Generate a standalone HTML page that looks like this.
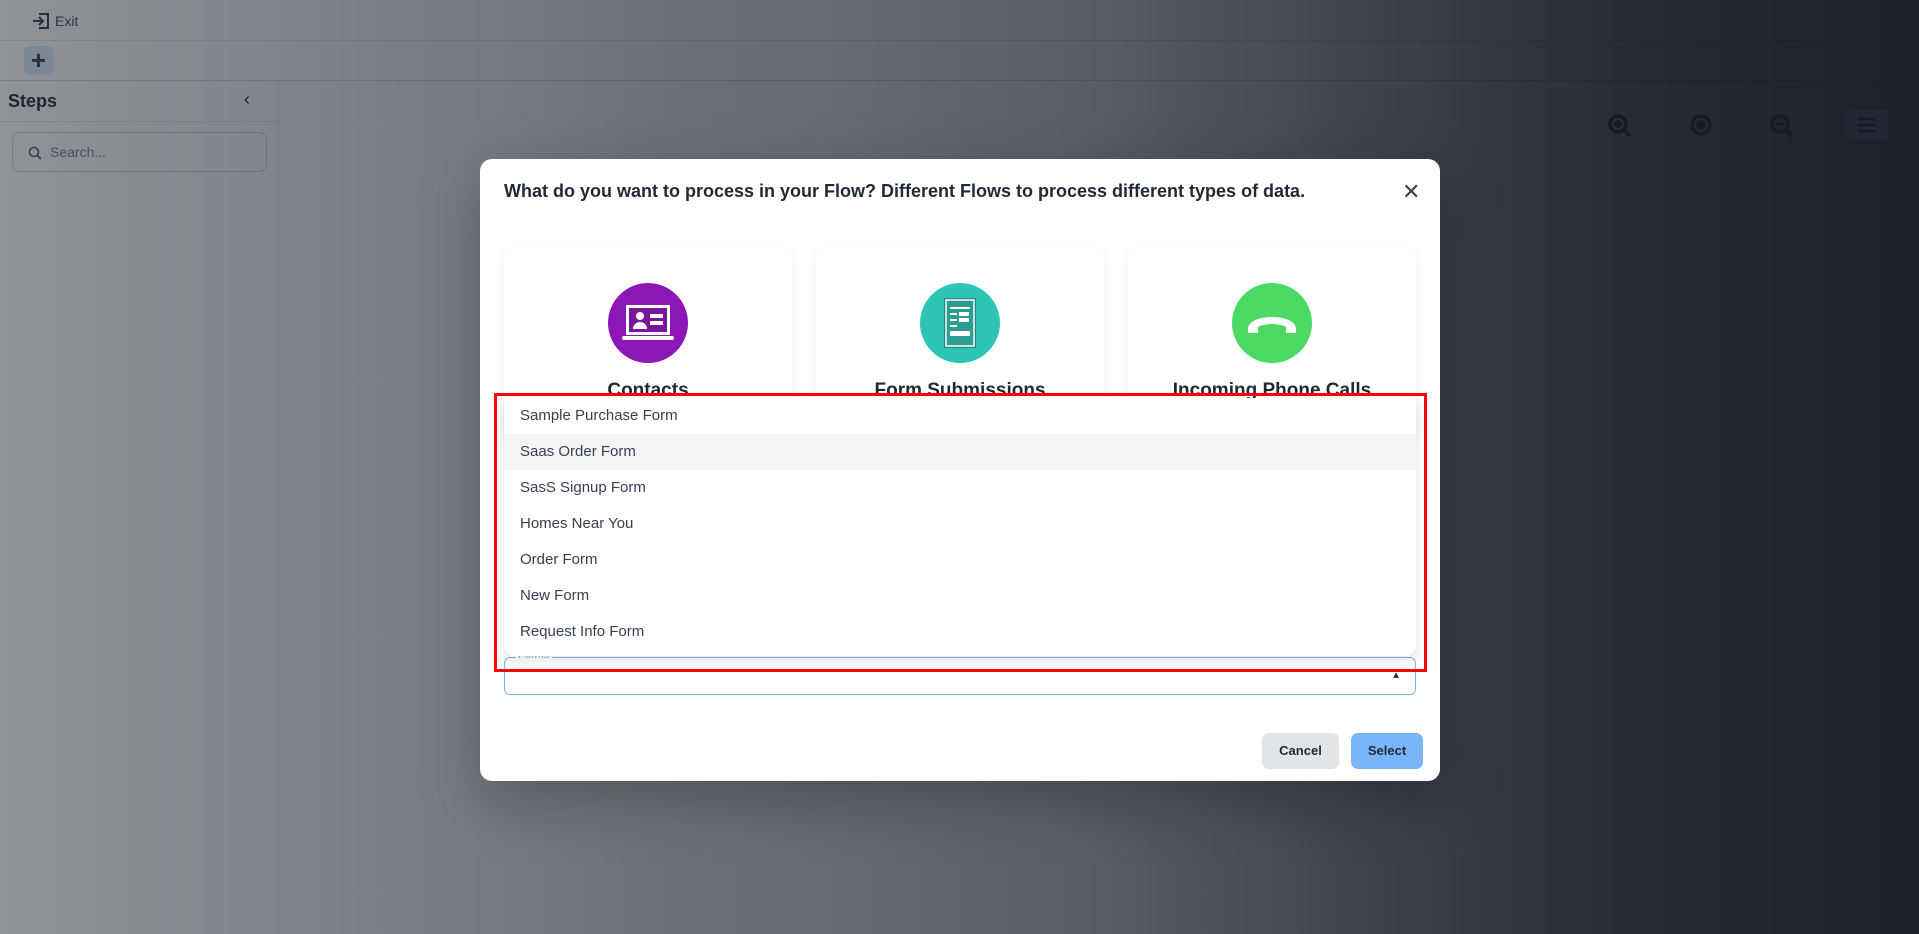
<!DOCTYPE html>
<html><head><meta charset="utf-8"><style>
*{box-sizing:border-box;margin:0;padding:0}
body{width:1919px;height:934px;overflow:hidden;position:relative;font-family:"Liberation Sans",sans-serif;background:linear-gradient(90deg,#909397 0%,#80848a 15%,#6d7177 35%,#5b6069 55%,#3d424b 72%,#262b34 85%,#1b2029 100%)}
.topline{position:absolute;left:0;right:0;height:1px;background:rgba(0,0,0,.08)}
.side{position:absolute;left:0;top:81px;width:279px;height:853px;border-right:1px solid rgba(0,0,0,.08)}
.modal{position:absolute;left:480px;top:159px;width:960px;height:622px;background:#fff;border-radius:12px;box-shadow:0 20px 60px rgba(0,0,0,.25)}
.title{position:absolute;left:24px;top:22px;font-size:18px;font-weight:bold;color:#1f2937}
.close{position:absolute;left:922px;top:20px;font-size:22px;color:#374151}
.card{position:absolute;top:88px;width:288px;height:200px;border-radius:14px;background:#fff;box-shadow:0 2px 10px rgba(0,0,0,.06)}
.circ{position:absolute;left:104px;top:36px;width:80px;height:80px;border-radius:50%}
.ctitle{position:absolute;top:133px;left:0;right:0;text-align:center;font-size:19px;font-weight:bold;color:#1f2937}
.list{position:absolute;left:24px;top:239px;width:912px;height:258px;background:#fff;border-radius:0 0 10px 10px;box-shadow:0 4px 12px rgba(0,0,0,.12)}
.item{height:36px;line-height:36px;padding-left:16px;font-size:15px;color:#374151}
.red{position:absolute;left:494px;top:393px;width:933px;height:279px;border:3px solid #ff0000}
.field{position:absolute;left:24px;top:498px;width:912px;height:38px;border:1.5px solid #7ab1f5;border-radius:6px}
.btn{position:absolute;top:574px;height:36px;border-radius:7px;font-size:13px;font-weight:bold;color:#1f2937;text-align:center;line-height:36px}
</style></head><body>
<div class="topline" style="top:40px"></div>
<div class="topline" style="top:80px;background:rgba(0,0,0,.12)"></div>
<svg style="position:absolute;left:32px;top:12px" width="18" height="18" viewBox="0 0 18 18" fill="none" stroke="#2a2f38" stroke-width="2"><path d="M7 2h9v14H7M1 9h10M7 5l4 4-4 4"/></svg>
<div style="position:absolute;left:55px;top:13px;font-size:14px;color:#2f3540">Exit</div>
<div style="position:absolute;left:24px;top:46px;width:29px;height:29px;border-radius:6px;background:#7d8896;color:#2a2f38;font-size:26px;font-weight:bold;text-align:center;line-height:29px">+</div>
<div class="side">
<div style="height:41px;border-bottom:1px solid rgba(0,0,0,.08);position:relative"><span style="position:absolute;left:8px;top:10px;font-size:18px;font-weight:bold;color:#1f2430">Steps</span><span style="position:absolute;left:244px;top:8px;font-size:18px;color:#1f2430">‹</span></div>
<div style="position:absolute;left:12px;top:51px;width:255px;height:40px;border:1px solid rgba(0,0,0,.15);border-radius:8px"><svg style="position:absolute;left:15px;top:13px" width="14" height="14" viewBox="0 0 14 14" fill="none" stroke="#3a3f48" stroke-width="1.6"><circle cx="6" cy="6" r="4.5"/><path d="M9.5 9.5L13 13"/></svg><span style="position:absolute;left:37px;top:11px;font-size:14px;color:#4a505a">Search...</span></div>
</div>
<svg style="position:absolute;left:1606px;top:112px" width="30" height="30" viewBox="0 0 30 30" fill="none" stroke="#161a21" stroke-width="3.5"><circle cx="12" cy="12" r="8"/><path d="M18 18l6 6M12 8v8M8 12h8"/></svg>
<svg style="position:absolute;left:1688px;top:112px" width="26" height="26" viewBox="0 0 26 26"><circle cx="13" cy="13" r="9" fill="none" stroke="#161a21" stroke-width="3"/><circle cx="13" cy="13" r="5" fill="#161a21"/></svg>
<svg style="position:absolute;left:1768px;top:112px" width="30" height="30" viewBox="0 0 30 30" fill="none" stroke="#161a21" stroke-width="3.5"><circle cx="12" cy="12" r="8"/><path d="M18 18l6 6M8 12h8"/></svg>
<div style="position:absolute;left:1845px;top:110px;width:43px;height:30px;background:#222833;border-radius:4px"><svg width="43" height="30" viewBox="0 0 43 30" stroke="#161a21" stroke-width="2.5"><path d="M13 9h17M13 15h17M13 21h17"/></svg></div>
<div class="modal">
<div class="title">What do you want to process in your Flow? Different Flows to process different types of data.</div>
<div class="close">✕</div>
<div class="card" style="left:24px"><div class="circ" style="background:#8d17b5"><svg width="80" height="80" viewBox="0 0 80 80"><rect x="18" y="22" width="44" height="30" fill="#fff"/><rect x="21" y="25" width="38" height="24" fill="#7a1499"/><circle cx="32" cy="33" r="4" fill="#fff"/><path d="M25 46a7 7 0 0 1 14 0z" fill="#fff"/><rect x="42" y="31" width="13" height="4" fill="#fff"/><rect x="42" y="38" width="13" height="4" fill="#fff"/><rect x="14" y="53" width="52" height="4" rx="2" fill="#fff"/></svg></div><div class="ctitle">Contacts</div></div>
<div class="card" style="left:336px"><div class="circ" style="background:#2ec4b6"><svg width="80" height="80" viewBox="0 0 80 80"><rect x="24" y="15" width="32" height="50" fill="#1f8a80"/><rect x="26" y="17" width="28" height="46" fill="#2a9d90" stroke="#fff" stroke-width="1.5"/><g fill="#fff"><rect x="30" y="24" width="20" height="2"/><rect x="30" y="30" width="7" height="2"/><rect x="39" y="29" width="10" height="4"/><rect x="30" y="36" width="7" height="2"/><rect x="39" y="35" width="10" height="4"/><rect x="30" y="42" width="7" height="2"/><rect x="30" y="48" width="20" height="5"/></g></svg></div><div class="ctitle">Form Submissions</div></div>
<div class="card" style="left:648px"><div class="circ" style="background:#4cd964"><svg width="80" height="80" viewBox="0 0 80 80"><path d="M16 46c0-16 48-16 48 0v4h-10v-6c-6-4-22-4-28 0v6H16z" fill="#fff"/></svg></div><div class="ctitle">Incoming Phone Calls</div></div>
<div class="field"><span style="position:absolute;left:10px;top:-9px;background:#fff;padding:0 3px;font-size:11px;color:#7ab1f5">Forms</span><span style="position:absolute;right:14px;top:12px;font-size:10px;color:#333">▲</span></div>
<div class="list">
<div class="item">Sample Purchase Form</div>
<div class="item" style="background:#f3f4f6">Saas Order Form</div>
<div class="item">SasS Signup Form</div>
<div class="item">Homes Near You</div>
<div class="item">Order Form</div>
<div class="item">New Form</div>
<div class="item">Request Info Form</div>
</div>
<div class="btn" style="left:782px;width:77px;background:#e1e4e8">Cancel</div>
<div class="btn" style="left:871px;width:72px;background:#7ab5fa">Select</div>
</div>
<div class="red"></div>
</body></html>
